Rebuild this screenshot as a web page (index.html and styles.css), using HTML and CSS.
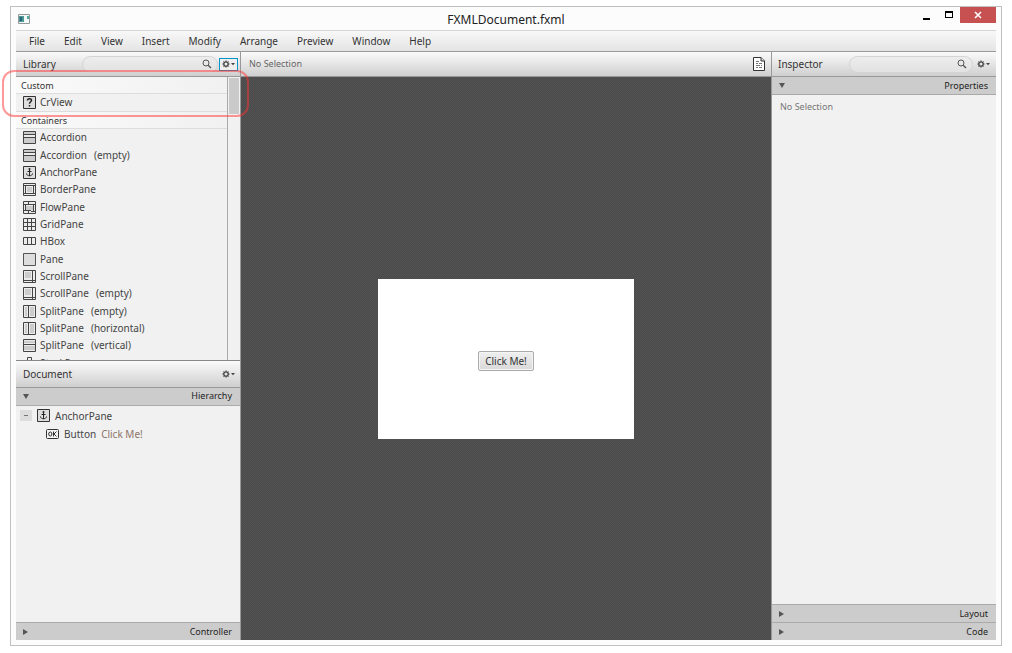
FILE: index.html
```html
<!DOCTYPE html>
<html lang="en">
<head>
<meta charset="utf-8">
<title>FXMLDocument.fxml</title>
<link rel="stylesheet" href="styles.css">
</head>
<body>
<svg class="defs" aria-hidden="true">
  <symbol id="i-custom" viewBox="0 0 13 13"><path class="box" d="M.5.5h12v12H.5z"/><path class="bold" d="M4.500 4.500c0-2.300 4-2.300 4-.2 0 1.500-2 1.500-2 3.400M6.500 9v1.500"/></symbol>
  <symbol id="i-accordion" viewBox="0 0 13 13"><path class="fill" d="M.5.5h12v12H.5z"/><path class="light" d="M1 4h11v2H1z"/><path class="fill" d="M1 7h11v5H1z"/><path class="line" d="M.5.5h12v12H.5zM0 3.500h13M0 6.500h13"/></symbol>
  <symbol id="i-anchor" viewBox="0 0 13 13"><path class="box" d="M.5.5h12v12H.5z"/><path class="mid" d="M6.500 3v7M4.500 5.500h4M3.500 7.500c0 3 6 3 6 0"/><circle class="dot" cx="6.500" cy="3" r="1"/></symbol>
  <symbol id="i-border" viewBox="0 0 13 13"><path class="light" d="M0 0h13v13H0z"/><path class="fill" d="M4 4h5v5H4z"/><path class="line" d="M.5.5h12v12H.5zM0 2.500h13M0 10.500h13M2.500 3v7M10.500 3v7"/></symbol>
  <symbol id="i-flow" viewBox="0 0 13 13"><path class="light" d="M0 0h13v13H0z"/><path class="fill" d="M3 5h7v4H3z"/><path class="line" d="M.5.5h12v12H.5zM0 3.500h13M5.500 0v3M0 9.500h8M2.500 4v5M10.500 3v7M8 10.500h5M5.500 10v3"/></symbol>
  <symbol id="i-grid" viewBox="0 0 13 13"><path class="light" d="M0 0h13v13H0z"/><path class="line" d="M.5.5h12v12H.5zM0 4.500h13M0 8.500h13M4.500 0v13M8.500 0v13"/></symbol>
  <symbol id="i-hbox" viewBox="0 0 13 13"><path class="light" d="M0 3h13v7H0z"/><path class="line" d="M.5 2.500h12v7H.5zM4.500 3v7M8.500 3v7"/></symbol>
  <symbol id="i-pane" viewBox="0 0 13 13"><path class="box thin" d="M.5.5h12v12H.5z"/></symbol>
  <symbol id="i-scroll" viewBox="0 0 13 13"><path class="light" d="M0 0h13v13H0z"/><path class="fill" d="M2 2h6v6H2z"/><path class="line" d="M.5.5h12v12H.5zM9.500 0v13M0 10.500h13"/></symbol>
  <symbol id="i-splith" viewBox="0 0 13 13"><path class="light" d="M0 0h13v13H0z"/><path class="fill" d="M2 2h2v9H2zM7 2h4v9H7z"/><path class="line" d="M.5.5h12v12H.5zM5.500 0v13"/></symbol>
  <symbol id="i-splitv" viewBox="0 0 13 13"><path class="light" d="M0 0h13v13H0z"/><path class="fill" d="M1 2h11v2H1zM1 7h11v4H1z"/><path class="line" d="M.5.5h12v12H.5zM0 5.500h13"/></symbol>
  <symbol id="i-stack" viewBox="0 0 13 13"><path class="line" d="M4.500 12V.5h4V12"/></symbol>
  <symbol id="i-search" viewBox="0 0 10 10"><circle cx="4" cy="4" r="3" fill="none" stroke="#555"/><path d="M6.200 6.200 9 9" stroke="#555" stroke-width="1.400"/></symbol>
  <symbol id="i-gear" viewBox="0 0 13 8"><circle cx="4" cy="4" r="2.200" fill="none" stroke="#444" stroke-width="1.300"/><path d="M4 .4v1.300M4 6.300v1.300M.4 4h1.300M6.300 4h1.300M1.500 1.500l.8.8M5.700 5.700l.8.8M6.500 1.500l-.8.8M2.300 5.700l-.8.8" stroke="#444"/><path d="M9 3h4l-2 2.200z" fill="#444"/></symbol>
</svg>

<div class="window">
  <header class="titlebar">
    <svg class="app-icon" width="12" height="10" viewBox="0 0 12 10"><path d="M.5.5h11v9H.5z" fill="#f5f8f8" stroke="#919999"/><path d="M1 2h5v6H1z" fill="#4b9a94"/><path d="M2 3h2v4H2z" fill="#28617c"/><path d="M9 2h2v3H9z" fill="#54aa9f"/></svg>
    <h1 class="title">FXMLDocument.fxml</h1>
    <div class="controls">
      <button class="ctl" aria-label="Minimize"><svg width="8" height="12" viewBox="0 0 8 12"><path d="M0 9h7v2H0z"/></svg></button>
      <button class="ctl" aria-label="Maximize"><svg width="8" height="12" viewBox="0 0 8 12"><path d="M0 2h8v7H0zM1 4v4h6V4z" fill-rule="evenodd"/></svg></button>
      <button class="ctl close" aria-label="Close"><svg width="8" height="8" viewBox="0 0 8 8"><path d="M1 1l6 6M7 1 1 7" stroke="#fff" stroke-width="1.600"/></svg></button>
    </div>
  </header>

  <div class="client">
    <nav class="menubar">
      <button>File</button><button>Edit</button><button>View</button><button>Insert</button><button>Modify</button><button>Arrange</button><button>Preview</button><button>Window</button><button>Help</button>
    </nav>
    <div class="workspace">
      <aside class="side">
        <section class="library">
          <div class="bar">
            <h2>Library</h2>
            <div class="search"><input type="text" aria-label="Search library"><svg width="10" height="10"><use href="#i-search"/></svg></div>
            <button class="gear focused" aria-label="Library options"><svg width="13" height="8"><use href="#i-gear"/></svg></button>
          </div>
          <div class="list">
            <div class="rows">
              <h3 class="group">Custom</h3>
              <ul class="items"><li class="tall"><svg class="ico"><use href="#i-custom"/></svg>CrView</li></ul>
              <h3 class="group">Containers</h3>
              <ul class="items">
                <li><svg class="ico"><use href="#i-accordion"/></svg>Accordion</li>
                <li><svg class="ico"><use href="#i-accordion"/></svg>Accordion <span>(empty)</span></li>
                <li><svg class="ico"><use href="#i-anchor"/></svg>AnchorPane</li>
                <li><svg class="ico"><use href="#i-border"/></svg>BorderPane</li>
                <li><svg class="ico"><use href="#i-flow"/></svg>FlowPane</li>
                <li><svg class="ico"><use href="#i-grid"/></svg>GridPane</li>
                <li><svg class="ico"><use href="#i-hbox"/></svg>HBox</li>
                <li><svg class="ico"><use href="#i-pane"/></svg>Pane</li>
                <li><svg class="ico"><use href="#i-scroll"/></svg>ScrollPane</li>
                <li><svg class="ico"><use href="#i-scroll"/></svg>ScrollPane <span>(empty)</span></li>
                <li><svg class="ico"><use href="#i-splith"/></svg>SplitPane <span>(empty)</span></li>
                <li><svg class="ico"><use href="#i-splith"/></svg>SplitPane <span>(horizontal)</span></li>
                <li><svg class="ico"><use href="#i-splitv"/></svg>SplitPane <span>(vertical)</span></li>
                <li><svg class="ico"><use href="#i-stack"/></svg>StackPane</li>
              </ul>
            </div>
            <div class="scrollbar"><div class="thumb"></div></div>
          </div>
        </section>
        <section class="document">
          <div class="bar">
            <h2>Document</h2>
            <button class="gear" aria-label="Document options"><svg width="13" height="8"><use href="#i-gear"/></svg></button>
          </div>
          <button class="fold open"><i class="tri"></i>Hierarchy</button>
          <div class="tree">
            <div class="node"><button class="toggle" aria-label="Collapse"></button><svg class="ico"><use href="#i-anchor"/></svg>AnchorPane</div>
            <div class="node child"><svg width="13" height="10" viewBox="0 0 13 10"><rect x=".5" y=".5" width="12" height="9" rx="1" fill="#f4f4f4" stroke="#333"/><ellipse cx="4.300" cy="5" rx="1.600" ry="2" fill="none" stroke="#333"/><path d="M7.500 2.500v5M10.500 2.500 8 5l2.500 2.500" fill="none" stroke="#333"/></svg>Button <em>Click Me!</em></div>
          </div>
          <button class="fold"><i class="tri"></i>Controller</button>
        </section>
      </aside>

      <main class="editor">
        <div class="bar crumb">
          <span>No Selection</span>
          <svg width="12" height="14" viewBox="0 0 12 14"><path d="M.5.5H8L11.500 4v9.500H.5z" fill="#fff" stroke="#333"/><path d="M8 .5V4h3.500" fill="#ddd" stroke="#333"/><path d="M3 4.500h3M3 6.500h2M6 6.500h3M3 8.500h4M8 8.500h1M3 10.500h2M6 10.500h3" stroke="#777"/></svg>
        </div>
        <div class="canvas"><div class="stage"><button class="click">Click Me!</button></div></div>
      </main>

      <aside class="side right">
        <div class="bar">
          <h2>Inspector</h2>
          <div class="search"><input type="text" aria-label="Search inspector"><svg width="10" height="10"><use href="#i-search"/></svg></div>
          <button class="gear" aria-label="Inspector options"><svg width="13" height="8"><use href="#i-gear"/></svg></button>
        </div>
        <button class="fold open"><i class="tri"></i>Properties</button>
        <div class="props">No Selection</div>
        <button class="fold"><i class="tri"></i>Layout</button>
        <button class="fold"><i class="tri"></i>Code</button>
      </aside>
    </div>
  </div>
</div>
<div class="highlight"></div>
</body>
</html>
```

FILE: styles.css
```css
* { box-sizing: border-box; }
html, body { height: 100%; }
body {
  margin: 0;
  padding: 6px 10px 7px;
  background: #fff;
  color: #333;
  font: 10px/16px "Noto Sans", sans-serif;
  overflow: hidden;
}
button, input { font: inherit; color: inherit; border: 0; background: none; padding: 0; margin: 0; }
h1, h2, h3, ul { margin: 0; padding: 0; font-weight: 400; list-style: none; }
svg { display: block; flex: none; }
.defs { position: absolute; width: 0; height: 0; }
.box { fill: #ddd; stroke: #333; }
.thin { stroke: #555; }
.fill { fill: #ccc; }
.light { fill: #ececec; }
.line { fill: none; stroke: #444; }
.bold { fill: none; stroke: #222; stroke-width: 1.5; }
.mid { fill: none; stroke: #222; }
.dot { fill: #222; }
.ico { width: 13px; height: 13px; }

.window {
  height: 100%;
  display: flex;
  flex-direction: column;
  border: 1px solid #c0c0c0;
  background: #fcfcfc;
  padding: 0 5px 5px;
}
.titlebar { display: grid; grid-template-columns: 1fr auto 1fr; height: 23px; flex: none; align-items: center; }
.app-icon { margin-left: 2px; }
.title { font-size: 12px; line-height: 22px; color: #222; padding-top: 2px; }
.controls { display: flex; justify-content: flex-end; align-self: start; }
.ctl { width: 22px; height: 16px; display: flex; align-items: center; justify-content: center; }
.ctl.close { width: 36px; background: #c75050; }

.client { flex: 1; min-height: 0; display: flex; flex-direction: column; border-top: 1px solid #d5d5d5; }
.menubar {
  flex: none;
  height: 21px;
  display: flex;
  gap: 19px;
  padding-left: 13px;
  background: linear-gradient(#f8f8f8, #e4e4e4);
  border-bottom: 1px solid #999;
}
.workspace { flex: 1; min-height: 0; display: flex; }
.side { width: 225px; flex: none; display: flex; flex-direction: column; border-right: 1px solid #999; background: #f1f1f1; }
.right { border-right: 0; border-left: 1px solid #999; }

.bar {
  flex: none;
  height: 25px;
  display: flex;
  align-items: center;
  padding: 0 2px 0 7px;
  background: linear-gradient(#fbfbfb, #cfcfcf);
  border-bottom: 1px solid #999;
}
.bar h2 { font-size: 10px; flex: 1; }
.search {
  display: flex;
  align-items: center;
  width: 136px;
  height: 17px;
  padding-right: 5px;
  border: 1px solid #d4d4d4;
  border-radius: 9px;
  background: linear-gradient(#ededed, #e2e2e2);
  margin-right: 1px;
}
.right .bar { padding-left: 6px; padding-right: 3px; }
.right .search { width: 124px; }
.search input { flex: 1; min-width: 0; height: 14px; padding-left: 8px; outline: 0; }
.gear { width: 19px; height: 13px; display: flex; align-items: center; justify-content: center; }
.focused { border: 1px solid #0096c9; background: #eee; }

.library { flex: 309; min-height: 0; display: flex; flex-direction: column; }
.list { flex: 1; min-height: 0; display: flex; overflow: hidden; }
.rows { flex: 1; overflow: hidden; }
.group { height: 17px; line-height: 17px; padding-left: 5px; font-size: 9px; background: linear-gradient(90deg, #fafafa, #f1f1f1); border-bottom: 1px solid #ddd; }
.items li { display: flex; align-items: flex-start; height: 17px; padding-left: 7px; gap: 4px; color: #444; white-space: nowrap; }
.items .ico { margin-top: 2px; }
.items li:nth-child(3n + 1) { height: 18px; }
.items .tall { border-bottom: 1px solid #ddd; }
.items span { margin-left: 3px; }
.scrollbar { width: 13px; border-left: 1px solid #aaa; padding: 1px; background: #f1f1f1; }
.thumb { height: 36px; background: #cacaca; }

.document { flex: 280; min-height: 0; display: flex; flex-direction: column; border-top: 1px solid #888; }
.document .bar { height: 27px; }
.fold {
  flex: none;
  display: flex;
  align-items: center;
  justify-content: space-between;
  height: 18px;
  padding: 0 8px 0 7px;
  background: #ccc;
  border-top: 1px solid #aaa;
  font-size: 9px;
  color: #222;
}
.fold.open { border-top: 0; border-bottom: 1px solid #aaa; }
.tri { border-left: 5px solid #555; border-top: 3px solid transparent; border-bottom: 3px solid transparent; }
.open .tri { border-top: 5px solid #555; border-left: 3px solid transparent; border-right: 3px solid transparent; border-bottom: 0; }
.tree { flex: 1; padding: 1px 0 0 4px; color: #444; }
.node { display: flex; align-items: center; height: 18px; gap: 5px; }
.toggle { width: 12px; height: 11px; background: #ddd; display: flex; align-items: center; justify-content: center; }
.toggle::before { content: ""; width: 4px; height: 1px; background: #777; }
.child { padding-left: 26px; }
.child em { font-style: normal; color: #8d7468; }

.editor { flex: 1; min-width: 0; display: flex; flex-direction: column; }
.crumb { justify-content: space-between; padding: 0 6px 0 8px; font-size: 9px; color: #666; }
.canvas {
  flex: 1;
  display: flex;
  align-items: center;
  justify-content: center;
  background: repeating-conic-gradient(#4b4b4b 0 25%, #525252 0 50%) 0 0 / 2px 2px;
}
.stage { width: 256px; height: 160px; background: #fff; display: flex; align-items: center; justify-content: center; padding-top: 4px; }
.click { width: 56px; height: 20px; line-height: 18px; border: 1px solid #aaa; border-radius: 2px; background: linear-gradient(#efefef, #d9d9d9); box-shadow: inset 0 0 0 1px #f5f5f5; }
.props { flex: 1; padding: 4px 8px; font-size: 9px; color: #777; }

.highlight { position: absolute; left: 2px; top: 70px; width: 247px; height: 47px; border: 2px solid rgba(255, 50, 50, 0.5); border-radius: 12px; pointer-events: none; }
```
